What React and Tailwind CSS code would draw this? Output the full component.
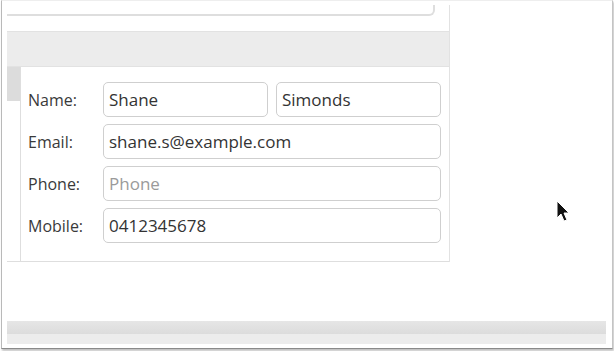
import React from 'react';

const Field = ({ value, placeholder, className = '' }) => (
    <input
        readOnly
        value={value}
        placeholder={placeholder}
        className={`h-[35px] rounded-[5px] border-[1.5px] border-[#cfcfcf] bg-white px-[5px] text-[17px] text-[#333] outline-none placeholder:text-[#9a9a9a] ${className}`}
    />
);

const Row = ({ label, children }) => (
    <div className="flex items-center">
        <span className="w-[75px] text-[16px] text-[#3a3a3a]">{label}</span>
        <div className="flex flex-1 gap-[8px]">{children}</div>
    </div>
);

export default function App() {
    return (
        <div className="relative h-[351px] w-[614px] bg-white font-['Open_Sans',sans-serif]">
            {/* screenshot frame */}
            <div className="ml-[1px] flex h-[349px] w-[612px] flex-col border border-t-[#eeeeee] border-l-[#b9b9b9] border-r-[#c4c4c4] border-b-[#8a8a8a] bg-white pl-[5px] shadow-[1px_2px_2px_rgba(0,0,0,0.25)]">
                <div className="mt-[4px] w-[443px] border-r border-[#e2e2e2]">
                    {/* top card remnant */}
                    <div className="h-[11px] w-[428px] rounded-br-[6px] border-b-2 border-r-2 border-[#dedede]" />

                    {/* grey toolbar */}
                    <div className="mt-[15px] h-[36px] border-y border-[#e2e2e2] bg-[#ececec]" />

                    {/* form section */}
                    <div className="flex border-b border-[#dedede]">
                        <div className="w-[13px] shrink-0">
                            <div className="h-[34px] bg-[#dcdcdc]" />
                        </div>
                        <div className="flex flex-1 flex-col gap-[7px] border-l border-[#dedede] pb-[18px] pl-[7px] pr-[10px] pt-[15px]">
                            <Row label="Name:">
                                <Field value="Shane" className="w-[165px]" />
                                <Field value="Simonds" className="w-[165px]" />
                            </Row>
                            <Row label="Email:">
                                <Field value="shane.s@example.com" className="w-full" />
                            </Row>
                            <Row label="Phone:">
                                <Field value="" placeholder="Phone" className="w-full" />
                            </Row>
                            <Row label="Mobile:">
                                <Field value="0412345678" className="w-full" />
                            </Row>
                        </div>
                    </div>
                </div>

                <div className="flex-1" />

                {/* bottom grey strip */}
                <div className="mb-[4px] w-[599px]">
                    <div className="h-[13px] bg-gradient-to-b from-[#e6e6e6] to-[#dcdcdc]" />
                    <div className="h-[10px] bg-[#ececec]" />
                </div>
            </div>

            {/* mouse pointer */}
            <svg className="absolute left-[555px] top-[200px]" width="16" height="24" viewBox="0 0 16 24">
                <path d="M2 1 L2 18 L6 14 L9 21 L12 20 L9 13 L14 13 Z" fill="#111" stroke="#ffffff" strokeWidth="1" strokeLinejoin="round" />
            </svg>
        </div>
    );
}
